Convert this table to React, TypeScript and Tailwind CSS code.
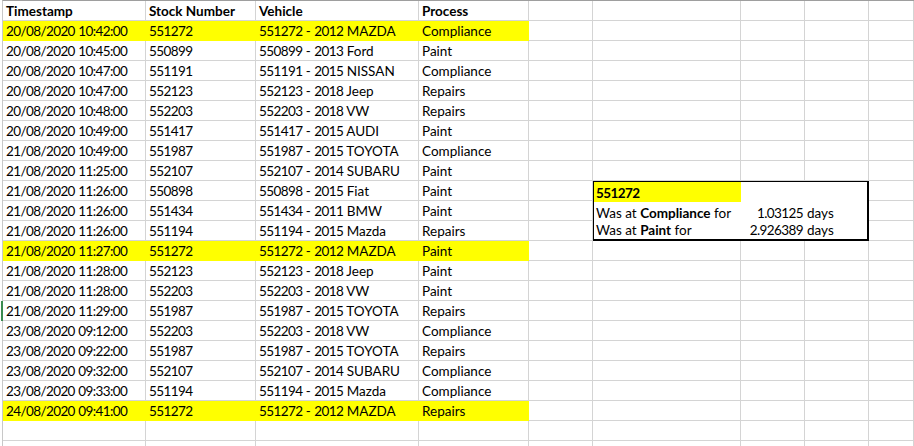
import React from "react";

type Row = [string, string, string, string, boolean?];

const rows: Row[] = [
  ["20/08/2020 10:42:00", "551272", "551272 - 2012 MAZDA", "Compliance", true],
  ["20/08/2020 10:45:00", "550899", "550899 - 2013 Ford", "Paint"],
  ["20/08/2020 10:47:00", "551191", "551191 - 2015 NISSAN", "Compliance"],
  ["20/08/2020 10:47:00", "552123", "552123 - 2018 Jeep", "Repairs"],
  ["20/08/2020 10:48:00", "552203", "552203 - 2018 VW", "Repairs"],
  ["20/08/2020 10:49:00", "551417", "551417 - 2015 AUDI", "Paint"],
  ["21/08/2020 10:49:00", "551987", "551987 - 2015 TOYOTA", "Compliance"],
  ["21/08/2020 11:25:00", "552107", "552107 - 2014 SUBARU", "Paint"],
  ["21/08/2020 11:26:00", "550898", "550898 - 2015 Fiat", "Paint"],
  ["21/08/2020 11:26:00", "551434", "551434 - 2011 BMW", "Paint"],
  ["21/08/2020 11:26:00", "551194", "551194 - 2015 Mazda", "Repairs"],
  ["21/08/2020 11:27:00", "551272", "551272 - 2012 MAZDA", "Paint", true],
  ["21/08/2020 11:28:00", "552123", "552123 - 2018 Jeep", "Paint"],
  ["21/08/2020 11:28:00", "552203", "552203 - 2018 VW", "Paint"],
  ["21/08/2020 11:29:00", "551987", "551987 - 2015 TOYOTA", "Repairs"],
  ["23/08/2020 09:12:00", "552203", "552203 - 2018 VW", "Compliance"],
  ["23/08/2020 09:22:00", "551987", "551987 - 2015 TOYOTA", "Repairs"],
  ["23/08/2020 09:32:00", "552107", "552107 - 2014 SUBARU", "Compliance"],
  ["23/08/2020 09:33:00", "551194", "551194 - 2015 Mazda", "Compliance"],
  ["24/08/2020 09:41:00", "551272", "551272 - 2012 MAZDA", "Repairs", true],
];

// Digits in the reference font are narrower than Lato's; tighten digit runs.
function T({ s }: { s: string }) {
  const parts = s.split(/([0-9/:.]+)/).filter((p) => p.length > 0);
  return (
    <>
      {parts.map((p, i) =>
        /^[0-9/:.]+$/.test(p) ? (
          <span key={i} className="tracking-[-0.6px]">
            {p}
          </span>
        ) : (
          <span key={i} className="whitespace-pre">
            {p}
          </span>
        )
      )}
    </>
  );
}

function Cell({
  children,
  yellow,
  bold,
  extra = "",
}: {
  children?: React.ReactNode;
  yellow?: boolean;
  bold?: boolean;
  extra?: string;
}) {
  return (
    <div
      className={
        "h-[20px] flex items-end pl-[3px] pb-[1px] whitespace-nowrap overflow-visible border-r border-b leading-[16px] " +
        (yellow ? "bg-[#ffff00] border-[#ffff00] " : "border-[#d4d4d4] ") +
        (bold ? "font-bold " : "") +
        extra
      }
    >
      {children}
    </div>
  );
}

export default function App() {
  const cells: React.ReactNode[] = [];
  const headers = ["Timestamp", "Stock Number", "Vehicle", "Process"];
  headers.forEach((h, i) =>
    cells.push(
      <Cell key={`h${i}`} bold>
        {h}
      </Cell>
    )
  );
  for (let i = 0; i < 5; i++) cells.push(<Cell key={`he${i}`} />);

  rows.forEach((r, ri) => {
    const y = !!r[4];
    const rowNum = ri + 2;
    cells.push(
      <Cell
        key={`a${ri}`}
        yellow={y}
        extra={rowNum === 16 ? "shadow-[-2px_0_0_#3a8a4f]" : ""}
      >
        <T s={r[0]} />
      </Cell>
    );
    cells.push(
      <Cell key={`b${ri}`} yellow={y}>
        <T s={r[1]} />
      </Cell>
    );
    cells.push(
      <Cell key={`c${ri}`} yellow={y}>
        <T s={r[2]} />
      </Cell>
    );
    cells.push(
      <Cell key={`d${ri}`} yellow={y}>
        {r[3]}
      </Cell>
    );
    cells.push(<Cell key={`e${ri}`} />);
    if (rowNum < 10 || rowNum > 12) {
      cells.push(<Cell key={`f${ri}`} />);
      cells.push(<Cell key={`g${ri}`} />);
      cells.push(<Cell key={`hh${ri}`} />);
    }
    cells.push(<Cell key={`i${ri}`} />);
  });
  for (let k = 0; k < 2; k++)
    for (let i = 0; i < 9; i++) cells.push(<Cell key={`z${k}-${i}`} />);

  const c = "flex items-end leading-[16px] pb-[1px] whitespace-nowrap";

  return (
    <div
      className="w-[914px] h-[446px] overflow-hidden bg-white text-black text-[13.5px]"
      style={{ fontFamily: "Lato, 'Open Sans', sans-serif" }}
    >
      <div className="ml-[2px] border-l border-t border-l-[#c8c8c8] border-t-[#9e9e9e] grid grid-cols-[143px_110px_163px_110px_64px_148px_64px_64px_1fr] grid-rows-[repeat(23,20px)]">
        <div className="col-start-6 col-span-3 row-start-10 row-span-3 -ml-[1px] -mt-[1px] border-2 border-black bg-white grid grid-cols-[147px_64px_1fr] grid-rows-[20px_20px_1fr]">
          <div className={`${c} bg-[#ffff00] font-bold pl-[2px]`}>
            <T s="551272" />
          </div>
          <div />
          <div />
          <div className={`${c} pl-[2px]`}>
            Was at&nbsp;<span className="font-bold">Compliance</span>&nbsp;for
          </div>
          <div className={`${c} justify-end pr-[2px]`}>
            <T s="1.03125" />
          </div>
          <div className={`${c} pl-[2px]`}>days</div>
          <div className={`${c} pl-[2px]`}>
            Was at&nbsp;<span className="font-bold">Paint</span>&nbsp;for
          </div>
          <div className={`${c} justify-end pr-[2px]`}>
            <T s="2.926389" />
          </div>
          <div className={`${c} pl-[2px]`}>days</div>
        </div>
        {cells}
      </div>
    </div>
  );
}
